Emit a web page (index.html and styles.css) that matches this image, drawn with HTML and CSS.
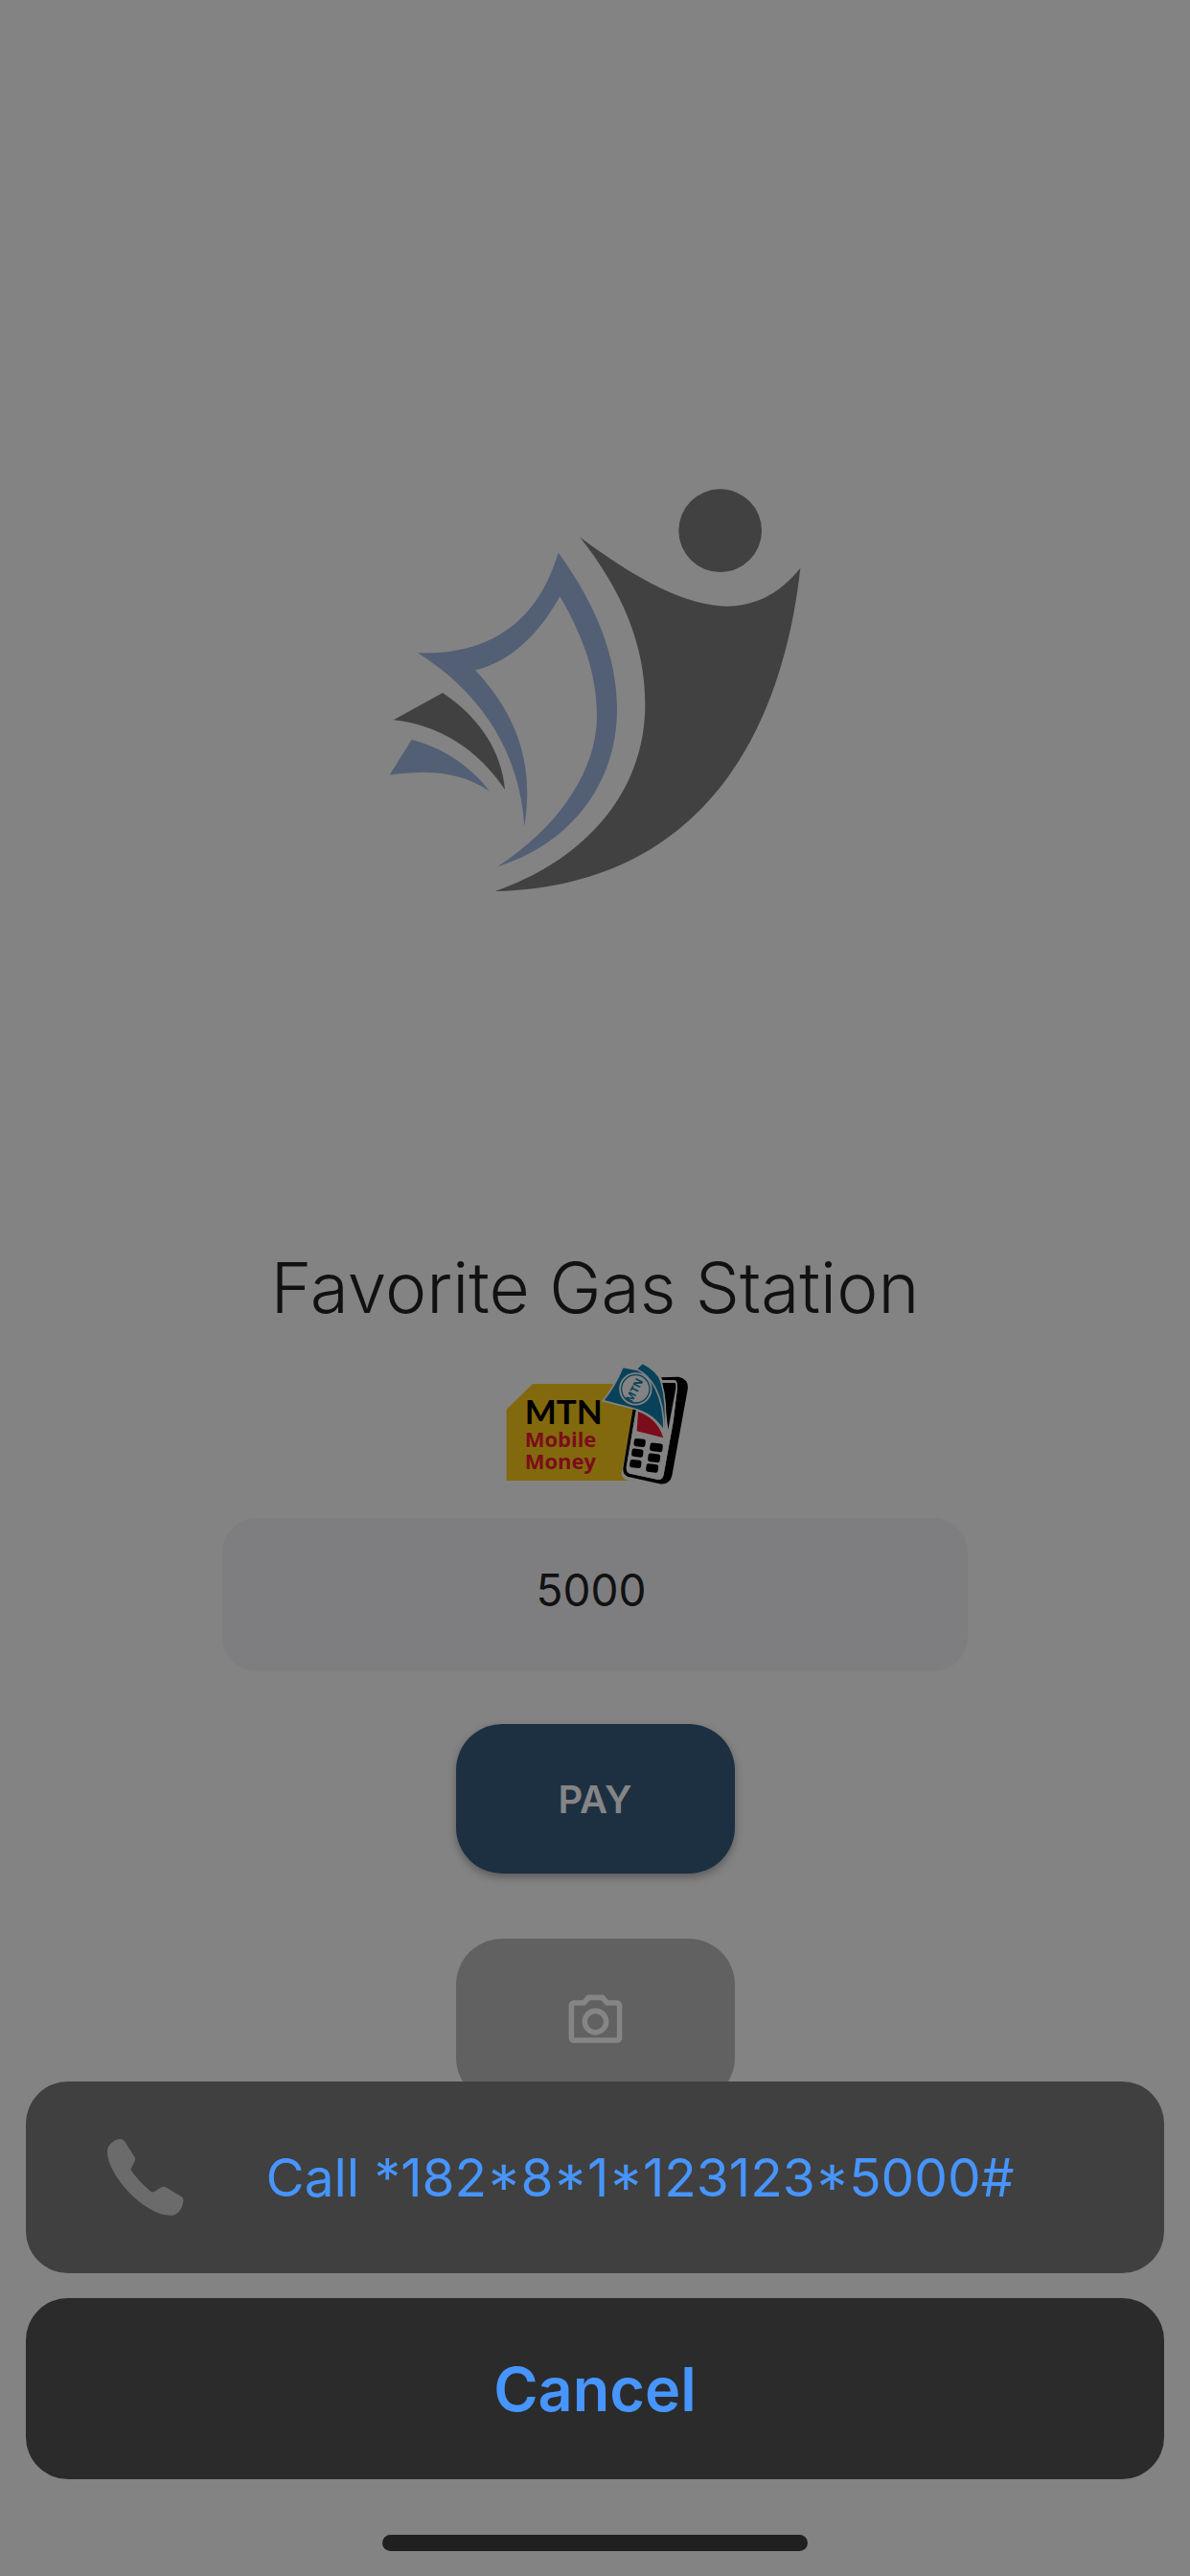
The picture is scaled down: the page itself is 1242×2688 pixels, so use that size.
FILE: index.html
```html
<!DOCTYPE html>
<html lang="en">
<head>
<meta charset="utf-8">
<meta name="viewport" content="width=device-width, initial-scale=1">
<title>Favorite Gas Station</title>
<link rel="stylesheet" href="styles.css">
</head>
<body>
<main class="page">
  <svg class="logo" viewBox="3 0 1380 1380" role="img" aria-label="Station logo">
    <g class="logo-dark">
      <circle cx="1085" cy="191" r="130"/>
      <path d="M645 211C830 350 985 429 1110 428C1200 425 1275 385 1336 308C1275 860 1000 1305 380 1320C680 1215 850 995 850 735C850 545 775 375 645 211Z"/>
      <path d="M216 699C330 775 400 880 411 1002C330 880 210 800 62 784Z"/>
    </g>
    <g class="logo-blue">
      <path d="M578 260C695 420 762 585 762 750C762 980 620 1170 388 1243C590 1110 699 935 699 770C699 640 655 520 583 397C515 520 425 603 318 628C455 775 502 930 472 1117C458 890 340 700 138 574C350 580 510 490 578 260Z"/>
      <path d="M119 845C220 872 305 930 363 1007C280 950 180 938 50 956Z"/>
    </g>
  </svg>

  <h1 class="title">Favorite Gas Station</h1>

  <svg class="momo" viewBox="3 0 660 450" role="img" aria-label="MTN Mobile Money">
    <path fill="#83690d" d="M138 102H400L468 190L430 340L470 405H56V182Z"/>
    <path fill="#838383" d="M455 180L418 370Q410 395 434 404L540 414L560 240Z"/>
    <path fill="#000" d="M540 82L595 80Q628 88 623 120L574 390Q566 420 535 415L437 393Q417 386 422 360L452 180H462L432 358Q428 378 443 383L530 402Q545 403 548 386L578 220L590 125Q593 92 582 91H545Z"/>
    <path fill="#838383" d="M540 90H582Q593 92 590 120L578 222L548 386Q545 403 530 402L443 383Q428 378 432 358L460 195Z"/>
    <path fill="#000" d="M543 99H583Q587 100 586 115L562 245L554 180Z"/>
    <path fill="#7b0d1a" d="M468 189Q528 210 547 271L464 250Z"/>
    <g fill="#000">
      <rect x="455" y="274" width="36" height="25" rx="7" transform="rotate(7 473 286)"/>
      <rect x="505" y="288" width="40" height="26" rx="7" transform="rotate(7 525 300)"/>
      <rect x="448" y="306" width="36" height="25" rx="7" transform="rotate(7 466 318)"/>
      <rect x="499" y="321" width="38" height="26" rx="7" transform="rotate(7 518 334)"/>
      <rect x="442" y="340" width="36" height="25" rx="7" transform="rotate(7 460 352)"/>
      <rect x="493" y="353" width="38" height="26" rx="7" transform="rotate(7 512 366)"/>
    </g>
    <g fill="#08415a" stroke="#838383" stroke-width="5">
      <path d="M460 58L481 37Q530 62 540 95Q560 160 551 256L515 130Z"/>
      <path d="M420 49L466 58Q500 75 522 115Q550 170 549 250Q515 195 455 180Q415 170 358 155Q395 110 420 49Z"/>
      <circle cx="460" cy="118" r="49" fill="#838383"/>
    </g>
    <circle cx="460" cy="118" r="44" fill="none" stroke="#08415a" stroke-width="4"/>
    <text class="momo-note" x="456" y="134" text-anchor="middle" transform="rotate(-63 456 122)">MTN</text>
    <text class="momo-brand" x="113" y="228">MTN</text>
    <text class="momo-line" x="113" y="300">Mobile</text>
    <text class="momo-line" x="113" y="368">Money</text>
  </svg>

  <form class="pay-form">
    <input class="amount" type="text" inputmode="numeric" value="5000" aria-label="Amount">
    <button class="pay" type="button">PAY</button>
    <button class="scan" type="button" aria-label="Scan with camera">
      <svg class="scan-icon" viewBox="0 0 24 24" aria-hidden="true"><path d="M20 4h-3.17L15 2H9L7.17 4H4c-1.1 0-2 .9-2 2v12c0 1.1.9 2 2 2h16c1.1 0 2-.9 2-2V6c0-1.1-.9-2-2-2zm0 14H4V6h4.05l1.83-2h4.24l1.83 2H20v12zM12 7c-2.760 0-5 2.240-5 5s2.240 5 5 5 5-2.240 5-5-2.240-5-5-5zm0 8c-1.650 0-3-1.350-3-3s1.350-3 3-3 3 1.350 3 3-1.350 3-3 3z"/></svg>
    </button>
  </form>
</main>

<section class="sheet" role="dialog" aria-label="Call confirmation">
  <button class="action call" type="button">
    <svg class="phone-icon" viewBox="0 0 240 240" aria-hidden="true"><path d="M0 42C-2 20 20 1 42 0Q50 0 55 8L86 57Q89 63 86 69L73 95Q93 127 136 164Q141 168 147 165L169 151Q176 148 183 151L233 181Q240 187 238 195C235 218 222 236 205 239C120 245 2 115 0 42Z"/></svg>
    <span class="call-label">Call *182*8*1*123123*5000#</span>
  </button>
  <button class="action cancel" type="button">Cancel</button>
  <div class="home-bar"></div>
</section>
</body>
</html>
```
FILE: styles.css
```css
* {
  box-sizing: border-box;
}

body {
  margin: 0;
  min-height: 100vh;
  background: #838383;
  color: #111;
  font-family: Inter, "Liberation Sans", sans-serif;
}

button,
input {
  border: 0;
  padding: 0;
  font-family: inherit;
}

.page {
  display: flex;
  flex-direction: column;
  align-items: center;
  padding: 490px 24px 0;
}

.logo {
  width: 460px;
  height: 460px;
}

.logo-dark {
  fill: #414141;
}

.logo-blue {
  fill: #535f75;
}

.title {
  margin: 350px 0 22px;
  font-size: 73px;
  font-weight: 300;
  line-height: 88px;
  text-align: center;
}

.momo {
  width: 220px;
  height: 150px;
}

.momo-brand,
.momo-line,
.momo-note {
  font-family: "Open Sans", "Noto Sans", sans-serif;
  font-weight: 700;
}

.momo-brand {
  font-family: Lato, "Open Sans", sans-serif;
  font-size: 105px;
}

.momo-line {
  font-size: 66px;
  fill: #7b0d1a;
}

.momo-note {
  font-size: 34px;
  fill: #08415a;
}

.pay-form {
  display: flex;
  flex-direction: column;
  align-items: center;
  width: 100%;
  max-width: 778px;
  margin-top: 24px;
}

.amount {
  width: 100%;
  height: 160px;
  padding: 0 8px 10px 0;
  border-radius: 36px;
  background: #7e7e81;
  color: #111;
  font-size: 46px;
  text-align: center;
}

.pay,
.scan {
  display: flex;
  align-items: center;
  justify-content: center;
  width: 291px;
  border-radius: 48px;
}

.pay {
  height: 156px;
  margin-top: 55px;
  background: #1d3042;
  box-shadow: 0 4px 8px rgba(0, 0, 0, 0.3);
  color: #858585;
  font-size: 40px;
  font-weight: 600;
}

.scan {
  height: 172px;
  margin-top: 68px;
  background: #616161;
}

.scan-icon {
  width: 67px;
  height: 67px;
  fill: #858585;
}

.sheet {
  position: fixed;
  right: 0;
  bottom: 0;
  left: 0;
  display: flex;
  flex-direction: column;
  align-items: center;
  padding: 0 27px 26px;
}

.action {
  width: 100%;
  border-radius: 44px;
  color: #4795ff;
}

.call {
  display: flex;
  align-items: center;
  height: 200px;
  margin-bottom: 26px;
  padding: 0 85px;
  background: #404040;
  font-size: 55px;
}

.phone-icon {
  flex: none;
  width: 80px;
  height: 80px;
  fill: #6b6b6b;
}

.call-label {
  flex: 1;
  padding-left: 14px;
  text-align: center;
}

.cancel {
  height: 189px;
  margin-bottom: 58px;
  background: #2b2b2b;
  font-size: 63px;
  font-weight: 600;
}

.home-bar {
  width: 444px;
  height: 17px;
  border-radius: 9px;
  background: #202020;
}
```
